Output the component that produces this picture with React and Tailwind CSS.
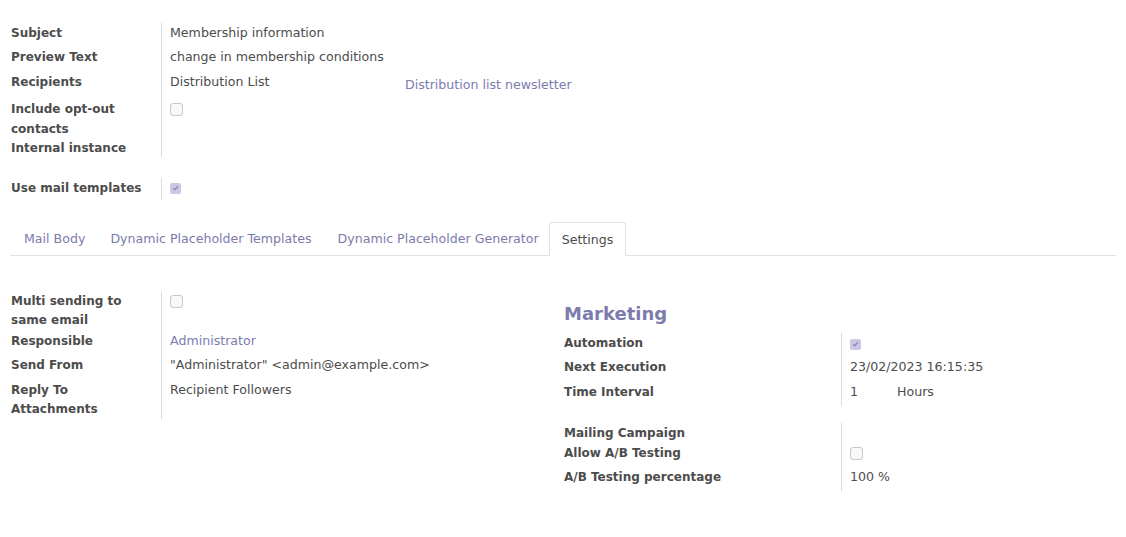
import React from "react";

const font = { fontFamily: '"DejaVu Sans", "Noto Sans", sans-serif' };

function Box({ checked }) {
  if (checked) {
    return (
      <span className="inline-flex w-[11px] h-[11px] rounded-[2px] bg-[#cac8e3] items-center justify-center">
        <svg width="7" height="6" viewBox="0 0 7 6">
          <path d="M1 3.2 L2.8 4.8 L6 1.2" fill="none" stroke="#8d8bbf" strokeWidth="1.3" />
        </svg>
      </span>
    );
  }
  return (
    <span className="inline-block w-[13px] h-[13px] rounded-[3px] border border-[#c9c9c9] bg-[#f8f8f8]" />
  );
}

function Row({ label, labelW, h, pt = "pt-0", children }) {
  return (
    <div className={`flex ${h}`}>
      <div className={`${labelW} shrink-0 font-bold text-[12px] ${pt} pl-px`}>{label}</div>
      <div className={`flex-1 border-l border-[#dcdcdc] pl-2 ${pt}`}>{children}</div>
    </div>
  );
}

export default function App() {
  const tabs = ["Mail Body", "Dynamic Placeholder Templates"];

  return (
    <div
      className="w-[1126px] h-[537px] bg-white text-[#4c4c4c] text-[12.6px] leading-[20px] px-[10px] pt-[23px]"
      style={font}
    >
      {/* top group */}
      <div className="w-[553px]">
        <Row label="Subject" labelW="w-[151px]" h="h-[24px]">Membership information</Row>
        <Row label="Preview Text" labelW="w-[151px]" h="h-[24px]">change in membership conditions</Row>
        <Row label="Recipients" labelW="w-[151px]" h="h-[28px]" pt="pt-px">
          <div className="flex whitespace-nowrap">
            <span className="w-[235px] shrink-0">Distribution List</span>
            <span className="text-[#7c7bad] pt-[3px]">Distribution list newsletter</span>
          </div>
        </Row>
        <Row label={<span className="block w-[120px]">Include opt-out contacts</span>} labelW="w-[151px]" h="h-[39px]">
          <div className="pt-[4px] leading-none"><Box /></div>
        </Row>
        <Row label="Internal instance" labelW="w-[151px]" h="h-[19px]">
          <span />
        </Row>
        <div className="h-[21px]" />
        <Row label="Use mail templates" labelW="w-[151px]" h="h-[22px]">
          <div className="pt-[3px] leading-none"><Box checked /></div>
        </Row>
      </div>

      {/* tabs */}
      <div className="mt-[22px] flex border-b border-[#dee2e6] h-[34px]">
        {tabs.map((t) => (
          <div key={t} className="px-[13px] pt-[7px] text-[#7c7bad] first:pl-[14px] first:pr-[12px]">{t}</div>
        ))}
        <div className="pl-[13px] pr-[10px] pt-[7px] text-[#7c7bad]">Dynamic Placeholder Generator</div>
        <div className="px-[12px] pt-[7px] border border-b-0 border-[#dee2e6] rounded-t-[3px] bg-white mb-[-1px] h-[34px] text-[#4c4c4c]">
          Settings
        </div>
      </div>

      {/* settings */}
      <div className="grid grid-cols-2 mt-[36px]">
        <div>
          <Row label={<span className="block w-[125px] leading-[19px]">Multi sending to same email</span>} labelW="w-[151px]" h="h-[39px]">
            <div className="pt-[3px] leading-none"><Box /></div>
          </Row>
          <Row label="Responsible" labelW="w-[151px]" h="h-[23px]">
            <span className="text-[#7c7bad]">Administrator</span>
          </Row>
          <Row label="Send From" labelW="w-[151px]" h="h-[24px]" pt="pt-px">
            "Administrator" &lt;admin@example.com&gt;
          </Row>
          <Row label="Reply To" labelW="w-[151px]" h="h-[21px]" pt="pt-[2px]">
            Recipient Followers
          </Row>
          <Row label="Attachments" labelW="w-[151px]" h="h-[20px]">
            <span />
          </Row>
        </div>

        <div className="mt-[9px]">
          <div className="text-[18px] leading-[26px] font-bold text-[#7c7bad] pl-px">Marketing</div>
          <div className="mt-[6px]">
            <Row label="Automation" labelW="w-[278px]" h="h-[24px]">
              <div className="pt-[4px] leading-none"><Box checked /></div>
            </Row>
            <Row label="Next Execution" labelW="w-[278px]" h="h-[25px]">23/02/2023 16:15:35</Row>
            <Row label="Time Interval" labelW="w-[278px]" h="h-[24px]">
              <div className="flex">
                <span className="w-[47px]">1</span>
                <span>Hours</span>
              </div>
            </Row>
          </div>
          <div className="mt-[17px]">
            <Row label="Mailing Campaign" labelW="w-[278px]" h="h-[20px]">
              <span />
            </Row>
            <Row label="Allow A/B Testing" labelW="w-[278px]" h="h-[24px]">
              <div className="pt-[4px] leading-none"><Box /></div>
            </Row>
            <Row label="A/B Testing percentage" labelW="w-[278px]" h="h-[24px]">100 %</Row>
          </div>
        </div>
      </div>
    </div>
  );
}
